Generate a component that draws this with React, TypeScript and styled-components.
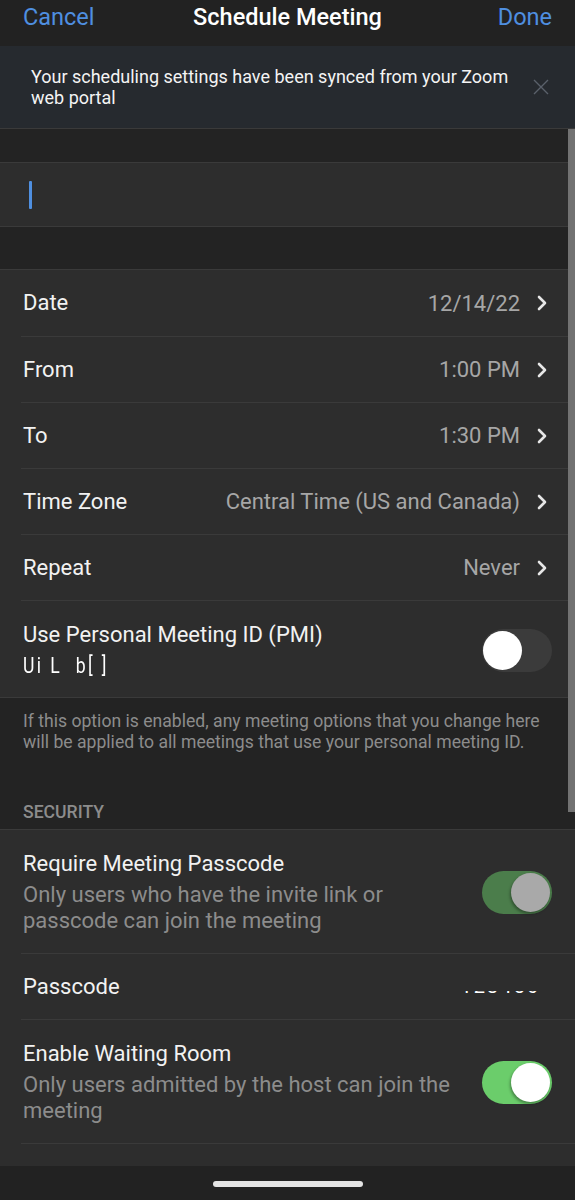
import { FC, ReactNode } from 'react';
import styled, { createGlobalStyle } from 'styled-components';

const GlobalStyle = createGlobalStyle`
  html, body {
    margin: 0;
    padding: 0;
    background: #232323;
  }
`;

const palette = {
  bg: '#232323',
  row: '#2d2d2d',
  banner: '#262a2f',
  border: '#3a3a3a',
  blue: '#4f8fe0',
  text: '#f2f2f2',
  sub: '#8c8c8c',
  value: '#a6a6a6',
};

const Chevron: FC = () => (
  <svg width="12" height="16" viewBox="0 0 12 16">
    <polyline points="3,2 9,8 3,14" fill="none" stroke="#e6e6e6" strokeWidth="2.6" strokeLinecap="round" strokeLinejoin="round" />
  </svg>
);

const CloseIcon: FC = () => (
  <svg width="16" height="16" viewBox="0 0 16 16">
    <path d="M1 1 L15 15 M15 1 L1 15" stroke="#5a616b" strokeWidth="1.4" />
  </svg>
);

type toggleProps = { on?: boolean; dim?: boolean };

const Toggle: FC<toggleProps> = ({ on, dim }) => (
  <_Track $on={on} $dim={dim}>
    <_Knob $on={on} $dim={dim} />
  </_Track>
);

type navRowProps = { label: string; value: string };

const NavRow: FC<navRowProps> = ({ label, value }) => (
  <_Row>
    <_RowInner>
      <_Label>{label}</_Label>
      <_Value>{value}</_Value>
      <Chevron />
    </_RowInner>
  </_Row>
);

type switchRowProps = { title: string; sub?: ReactNode; on?: boolean; dim?: boolean };

const SwitchRow: FC<switchRowProps> = ({ title, sub, on, dim }) => (
  <_Row>
    <_SwitchInner>
      <_SwitchText>
        <_Label>{title}</_Label>
        {sub}
      </_SwitchText>
      <Toggle on={on} dim={dim} />
    </_SwitchInner>
  </_Row>
);

export default function App() {
  return (
    <_Screen>
      <GlobalStyle />
      <_Header>
        <_HeaderButton>Cancel</_HeaderButton>
        <_Title>Schedule Meeting</_Title>
        <_HeaderButton $right>Done</_HeaderButton>
      </_Header>
      <_Banner>
        <_BannerText>Your scheduling settings have been synced from your Zoom web portal</_BannerText>
        <CloseIcon />
      </_Banner>
      <_Gap $h={33} />
      <_InputRow>
        <_Cursor />
      </_InputRow>
      <_Gap $h={42} />
      <_Group>
        <NavRow label="Date" value="12/14/22" />
        <NavRow label="From" value="1:00 PM" />
        <NavRow label="To" value="1:30 PM" />
        <NavRow label="Time Zone" value="Central Time (US and Canada)" />
        <NavRow label="Repeat" value="Never" />
        <SwitchRow title="Use Personal Meeting ID (PMI)" sub={<_Masked>Ui L  b[ ]</_Masked>} />
      </_Group>
      <_Note>
        If this option is enabled, any meeting options that you change here will be applied to all meetings that use
        your personal meeting ID.
      </_Note>
      <_SectionTitle>SECURITY</_SectionTitle>
      <_Group>
        <SwitchRow
          title="Require Meeting Passcode"
          sub={<_Sub>Only users who have the invite link or passcode can join the meeting</_Sub>}
          on
          dim
        />
        <_Row>
          <_RowInner>
            <_Label>Passcode</_Label>
            <_PasscodeStrip>
              <span>123456</span>
            </_PasscodeStrip>
          </_RowInner>
        </_Row>
        <SwitchRow
          title="Enable Waiting Room"
          sub={<_Sub>Only users admitted by the host can join the meeting</_Sub>}
          on
        />
        <SwitchRow title="Only Allow Authenticated Users" />
      </_Group>
      <_ScrollBar />
      <_HomeBar>
        <_HomeIndicator />
      </_HomeBar>
    </_Screen>
  );
}

const _Screen = styled.div`
  position: relative;
  width: 575px;
  height: 1200px;
  overflow: hidden;
  background: ${palette.bg};
  font-family: Roboto, 'Noto Sans', sans-serif;
  color: ${palette.text};
`;

const _Header = styled.header`
  height: 46px;
  display: grid;
  grid-template-columns: 1fr auto 1fr;
  align-items: start;
  padding: 2px 23px 0 23px;
  box-sizing: border-box;
  background: #222222;
`;

const _HeaderButton = styled.span<{ $right?: boolean }>`
  justify-self: ${(p) => (p.$right ? 'end' : 'start')};
  font-size: 23.5px;
  line-height: 30px;
  color: ${palette.blue};
`;

const _Title = styled.span`
  font-size: 23.5px;
  line-height: 30px;
  font-weight: 500;
  color: #ffffff;
`;

const _Banner = styled.div`
  height: 83px;
  box-sizing: border-box;
  display: flex;
  align-items: center;
  justify-content: space-between;
  padding: 0 26px 0 31px;
  background: ${palette.banner};
  border-bottom: 1px solid ${palette.border};
`;

const _BannerText = styled.p`
  margin: 0;
  width: 490px;
  font-size: 18px;
  line-height: 21px;
  color: #f4f4f4;
`;

const _Gap = styled.div<{ $h: number }>`
  height: ${(p) => p.$h}px;
`;

const _InputRow = styled.div`
  height: 65px;
  box-sizing: border-box;
  display: flex;
  align-items: center;
  padding-left: 29px;
  background: ${palette.row};
  border-top: 1px solid ${palette.border};
  border-bottom: 1px solid ${palette.border};
`;

const _Cursor = styled.div`
  width: 3px;
  height: 28px;
  border-radius: 1px;
  background: ${palette.blue};
`;

const _Group = styled.section`
  background: ${palette.row};
  border-top: 1px solid ${palette.border};
  border-bottom: 1px solid ${palette.border};
`;

const _Row = styled.div`
  padding-left: 21px;
  & + & > div {
    border-top: 1px solid ${palette.border};
  }
`;

const _RowInner = styled.div`
  height: 66px;
  box-sizing: border-box;
  display: flex;
  align-items: center;
  gap: 14px;
  padding: 0 27px 0 2px;
`;

const _Label = styled.div`
  flex: 1;
  font-size: 22px;
  line-height: 26px;
  color: ${palette.text};
`;

const _Value = styled.span`
  font-size: 22px;
  color: ${palette.value};
  margin-right: 2px;
`;

const _SwitchInner = styled.div`
  display: flex;
  align-items: center;
  padding: 21px 23px 19px 2px;
  min-height: 56px;
`;

const _SwitchText = styled.div`
  flex: 1;
  display: flex;
  flex-direction: column;
  gap: 5px;
`;

const _Sub = styled.div`
  width: 440px;
  font-size: 22px;
  line-height: 26px;
  color: ${palette.sub};
`;

const _Masked = styled.div`
  font-size: 22px;
  line-height: 25px;
  letter-spacing: 3px;
  white-space: pre;
  color: #ffffff;
  transform: scaleX(0.8);
  transform-origin: left center;
  filter: blur(0.7px);
`;

const _PasscodeStrip = styled.div`
  height: 4px;
  overflow: hidden;
  margin-top: 12px;
  margin-right: 8px;
  span {
    display: block;
    margin-top: -15px;
    font-size: 20px;
    line-height: 20px;
    letter-spacing: 2px;
    color: #ffffff;
  }
`;

const _Track = styled.div<{ $on?: boolean; $dim?: boolean }>`
  position: relative;
  width: 70px;
  height: 43px;
  border-radius: 22px;
  flex-shrink: 0;
  background: ${(p) => (p.$on ? (p.$dim ? '#4b7d4b' : '#6bcd6b') : '#3b3b3b')};
`;

const _Knob = styled.div<{ $on?: boolean; $dim?: boolean }>`
  position: absolute;
  top: 2px;
  left: ${(p) => (p.$on ? '29px' : '1px')};
  width: 39px;
  height: 39px;
  border-radius: 50%;
  background: ${(p) => (p.$dim ? '#a9a9a9' : '#ffffff')};
  box-shadow: ${(p) => (p.$on ? '-1px 2px 3px rgba(0,0,0,0.35)' : 'none')};
`;

const _Note = styled.p`
  margin: 0;
  padding: 13px 14px 0 23px;
  font-size: 17.6px;
  line-height: 21px;
  color: ${palette.sub};
`;

const _SectionTitle = styled.div`
  padding: 49px 23px 7px;
  font-size: 17.6px;
  line-height: 20px;
  font-weight: 500;
  color: ${palette.sub};
`;

const _ScrollBar = styled.div`
  position: absolute;
  top: 129px;
  right: 0;
  width: 7px;
  height: 683px;
  background: #727272;
`;

const _HomeBar = styled.div`
  position: absolute;
  left: 0;
  right: 0;
  bottom: 0;
  height: 34px;
  display: flex;
  justify-content: center;
  padding-top: 15px;
  box-sizing: border-box;
  background: #222222;
`;

const _HomeIndicator = styled.div`
  width: 150px;
  height: 6px;
  border-radius: 3px;
  background: #e4e4e4;
`;
